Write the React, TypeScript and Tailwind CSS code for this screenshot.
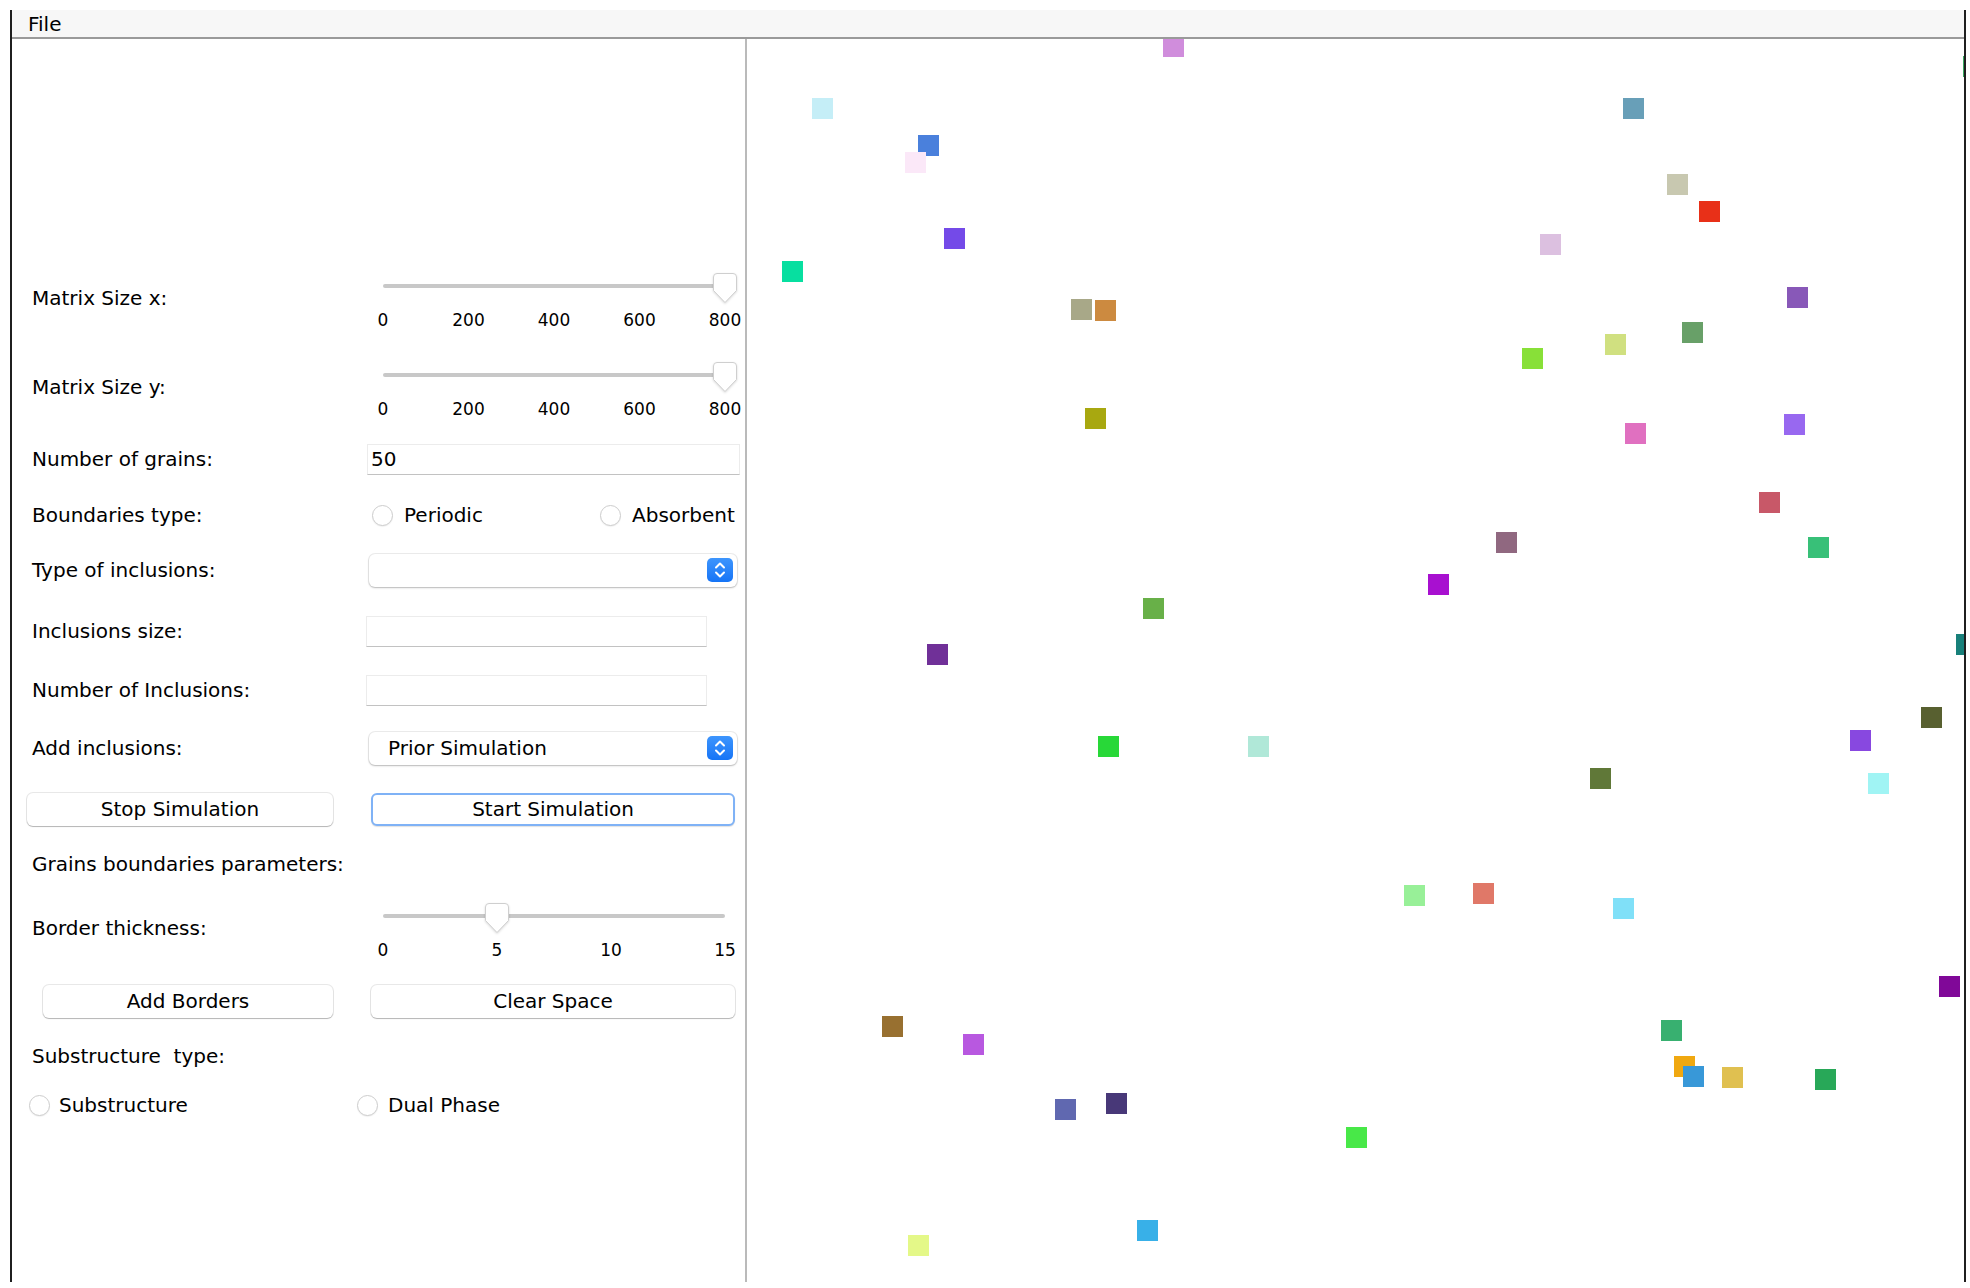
import React from 'react'

// grain centres measured on the shrunk reference; scaled to the full frame
const S = 1.2564
const grains: [number, number, string][] = [
  [934, 37, '#d08ddc'],
  [655, 86, '#c5eef7'],
  [739, 116, '#4a80dc'],
  [729, 129, '#fbe8f8'],
  [760, 190, '#744ae8'],
  [631, 216, '#07dfa0'],
  [861, 246, '#a8a888'],
  [880, 247, '#cc8a40'],
  [1300, 86, '#689fb8'],
  [1335, 147, '#c8c8b0'],
  [1361, 168, '#e83018'],
  [1234, 195, '#dcc0e0'],
  [1431, 237, '#8858b8'],
  [1220, 285, '#88e038'],
  [1286, 274, '#d0e080'],
  [1347, 265, '#68a068'],
  [872, 333, '#a8a810'],
  [1302, 345, '#e070c0'],
  [1428, 338, '#9868f0'],
  [1408, 400, '#c85868'],
  [1199, 432, '#906880'],
  [1447, 436, '#38c078'],
  [1145, 465, '#a810d0'],
  [918, 484, '#68b048'],
  [746, 521, '#703098'],
  [1565, 513, '#18807a'],
  [1537, 571, '#586030'],
  [1481, 589, '#8848e0'],
  [1495, 624, '#a0f4f4'],
  [882, 594, '#28d838'],
  [1002, 594, '#b0e8d8'],
  [1274, 620, '#607838'],
  [1126, 713, '#98f098'],
  [1181, 711, '#e07868'],
  [1292, 723, '#80e0f8'],
  [1552, 785, '#800898'],
  [710, 817, '#987030'],
  [775, 831, '#b858e0'],
  [1330, 820, '#38b070'],
  [1341, 849, '#f0a810'],
  [1348, 857, '#3898d8'],
  [1379, 858, '#e0c050'],
  [1453, 859, '#28a858'],
  [848, 883, '#6068b0'],
  [889, 878, '#483878'],
  [1080, 905, '#48e848'],
  [913, 979, '#38b0e8'],
  [731, 991, '#e4f888'],
  [1571, 53, '#3aa860'],
]

const font = "font-['DejaVu_Sans','Liberation_Sans',sans-serif]"

function Thumb() {
  return (
    <svg width="24" height="30" viewBox="0 0 24 30" className="drop-shadow-[0_1px_1px_rgba(0,0,0,0.15)]">
      <path d="M4 0.5 H20 Q23.5 0.5 23.5 4 V17.5 L12 29.5 L0.5 17.5 V4 Q0.5 0.5 4 0.5 Z" fill="#ffffff" stroke="#cfcfcf" />
    </svg>
  )
}

function SliderRow({ label, ticks, value, className }: { label: string; ticks: string[]; value: number; className?: string }) {
  const n = ticks.length - 1
  return (
    <div className={`flex h-[55px] ${className ?? ''}`}>
      <div className="w-[334px] pt-[13px] leading-[24px]">{label}</div>
      <div className="relative w-[375px] h-[55px]">
        <div className="absolute left-[17px] top-[11px] w-[342px] h-[4px] rounded-full bg-[#c8c8c8]" />
        <div className="absolute top-0" style={{ left: 17 + value * 342 - 12 }}>
          <Thumb />
        </div>
        {ticks.map((t, i) => (
          <div
            key={t}
            className="absolute top-[37px] -translate-x-1/2 text-[17px] leading-[20px]"
            style={{ left: 17 + (i / n) * 342 }}
          >
            {t}
          </div>
        ))}
      </div>
    </div>
  )
}

function Radio({ label, gap = 'ml-[11px]' }: { label: string; gap?: string }) {
  return (
    <div className="flex items-center">
      <span className="w-[21px] h-[21px] rounded-full bg-white border border-[#cdcdcd] shadow-[0_1px_1px_rgba(0,0,0,0.06)]" />
      <span className={`${gap} leading-[24px]`}>{label}</span>
    </div>
  )
}

function Combo({ text }: { text?: string }) {
  return (
    <div className="ml-[3px] w-[368px] h-[33px] rounded-[6px] bg-white shadow-[0_0_0_1px_rgba(0,0,0,0.07),0_1px_2px_rgba(0,0,0,0.22)] flex items-center justify-between pl-[19px] pr-[4px]">
      <span className="leading-[24px]">{text}</span>
      <span className="w-[26px] h-[24px] rounded-[5px] bg-gradient-to-b from-[#3d95fd] to-[#1574f6] flex items-center justify-center">
        <svg width="14" height="18" viewBox="0 0 14 18" fill="none" stroke="#ffffff" strokeWidth="2" strokeLinecap="round" strokeLinejoin="round">
          <path d="M3 6.5 L7 2.5 L11 6.5" />
          <path d="M3 11.5 L7 15.5 L11 11.5" />
        </svg>
      </span>
    </div>
  )
}

function TextInput({ value, w }: { value?: string; w: string }) {
  return (
    <div className={`${w} h-[31px] bg-white border border-[#ececec] border-b-[#c2c2c2] flex items-center pl-[3px] leading-[24px]`}>
      {value}
    </div>
  )
}

function Btn({ label, className }: { label: string; className: string }) {
  return (
    <div className={`h-[33px] rounded-[6px] bg-white flex items-center justify-center leading-[24px] ${className}`}>
      {label}
    </div>
  )
}

function Row({ label, children, className }: { label: string; children?: React.ReactNode; className?: string }) {
  return (
    <div className={`flex items-center h-[40px] ${className ?? ''}`}>
      <div className="w-[334px] leading-[24px]">{label}</div>
      {children}
    </div>
  )
}

export default function App() {
  return (
    <div className={`w-[1970px] h-[1288px] bg-white pt-[10px] pl-[10px] text-[20px] text-black ${font}`}>
      <div className="w-[1956px] h-[1272px] border-x-2 border-[#1f1f1f] flex flex-col">
        {/* menu bar */}
        <div className="h-[29px] shrink-0 bg-[#f7f7f7] border-b-2 border-[#9a9a9a] pl-[16px] flex items-center leading-[24px]">
          File
        </div>

        <div className="flex flex-1 min-h-0">
          {/* control panel */}
          <div className="w-[735px] shrink-0 border-r-2 border-[#bababa] pl-[20px] pt-[234px] flex flex-col">
            <SliderRow label="Matrix Size x:" ticks={['0', '200', '400', '600', '800']} value={1} />
            <SliderRow label="Matrix Size y:" ticks={['0', '200', '400', '600', '800']} value={1} className="mt-[34px]" />

            <Row label="Number of grains:" className="mt-[22px]">
              <div className="ml-[1px]">
                <TextInput value="50" w="w-[373px]" />
              </div>
            </Row>

            <Row label="Boundaries type:" className="mt-[16px]">
              <div className="ml-[6px] w-[366px] flex items-center">
                <div className="w-[228px]">
                  <Radio label="Periodic" />
                </div>
                <Radio label="Absorbent" />
              </div>
            </Row>

            <Row label="Type of inclusions:" className="mt-[15px]">
              <Combo />
            </Row>

            <Row label="Inclusions size:" className="mt-[21px]">
              <TextInput w="w-[341px]" />
            </Row>

            <Row label="Number of Inclusions:" className="mt-[19px]">
              <TextInput w="w-[341px]" />
            </Row>

            <Row label="Add inclusions:" className="mt-[18px]">
              <Combo text="Prior Simulation" />
            </Row>

            <div className="flex items-center h-[40px] mt-[21px]">
              <Btn label="Stop Simulation" className="ml-[-5px] w-[306px] shadow-[0_0_0_1px_rgba(0,0,0,0.09),0_1px_1px_rgba(0,0,0,0.22)]" />
              <Btn label="Start Simulation" className="ml-[38px] w-[364px] border-2 border-[#7fb2f6] shadow-[0_1px_1px_rgba(0,0,0,0.12)]" />
            </div>

            <div className="h-[40px] mt-[15px] flex items-center leading-[24px]">Grains boundaries parameters:</div>

            <SliderRow label="Border thickness:" ticks={['0', '5', '10', '15']} value={1 / 3} className="mt-[19px]" />

            <div className="flex items-center h-[40px] mt-[23px]">
              <Btn label="Add Borders" className="ml-[11px] w-[290px] shadow-[0_0_0_1px_rgba(0,0,0,0.09),0_1px_1px_rgba(0,0,0,0.22)]" />
              <Btn label="Clear Space" className="ml-[38px] w-[364px] shadow-[0_0_0_1px_rgba(0,0,0,0.09),0_1px_1px_rgba(0,0,0,0.22)]" />
            </div>

            <div className="h-[40px] mt-[15px] flex items-center leading-[24px]">Substructure&nbsp; type:</div>

            <div className="flex items-center h-[40px] mt-[9px] ml-[-3px]">
              <div className="w-[328px]">
                <Radio label="Substructure" gap="ml-[9px]" />
              </div>
              <Radio label="Dual Phase" gap="ml-[10px]" />
            </div>
          </div>

          {/* grain canvas */}
          <div className="relative flex-1 overflow-hidden bg-white">
            {grains.map(([x, y, c], i) => (
              <div
                key={i}
                className="absolute w-[21px] h-[21px]"
                style={{ left: x * S - 747 - 10.5, top: y * S - 39 - 10.5, backgroundColor: c }}
              />
            ))}
          </div>
        </div>
      </div>
    </div>
  )
}
